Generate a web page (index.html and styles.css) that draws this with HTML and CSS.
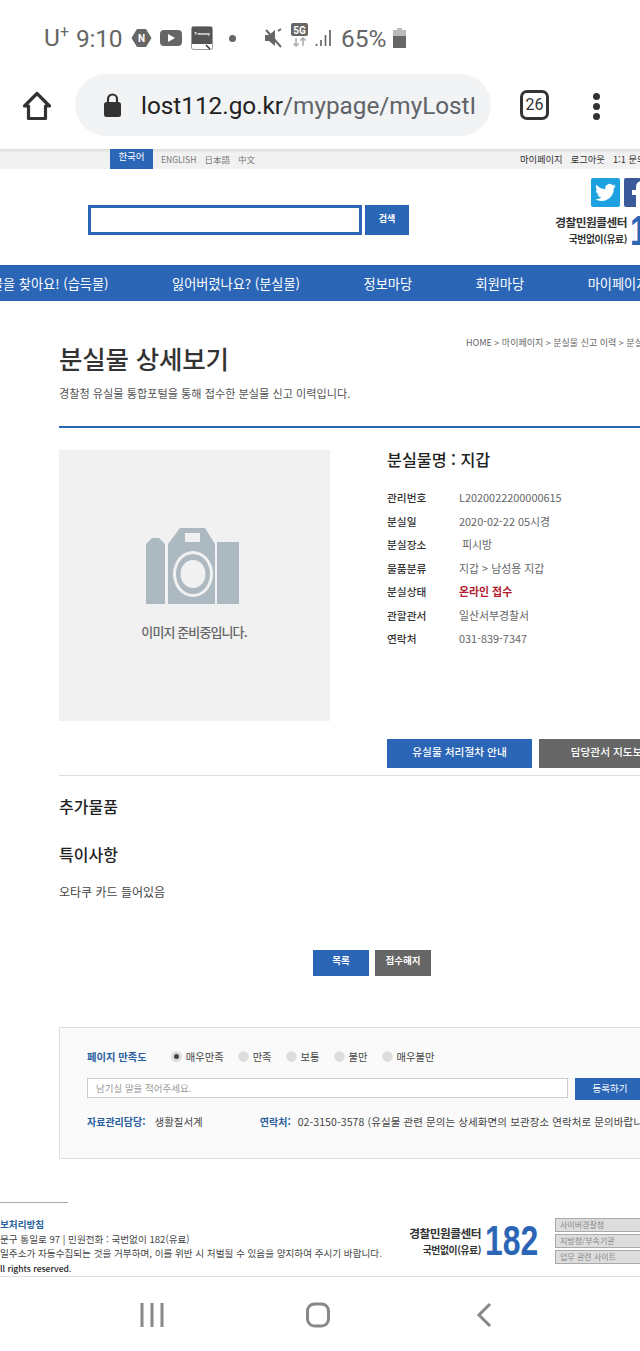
FILE: index.html
```html
<!DOCTYPE html>
<html lang="ko">
<head>
<meta charset="utf-8">
<title>분실물 상세보기</title>
<link rel="stylesheet" href="styles.css">
</head>
<body>
<div class="app">
  <div class="status">
    <span class="carrier">U<sup>+</sup></span>
    <span class="clock">9:10</span>
    <svg class="si-n" width="21" height="20" viewBox="0 0 21 20"><path d="M6 1h9l5.500 9-5.500 9H6L.5 10z" fill="#666"/><text x="10.500" y="14" class="si-n-t">N</text></svg>
    <svg class="si-play" width="22" height="18" viewBox="0 0 22 18"><rect y="1" width="22" height="16" rx="4" fill="#666"/><path d="M8 5l7 4-7 4z" fill="#fff"/></svg>
    <svg class="si-tm" width="22" height="24" viewBox="0 0 22 24"><rect x=".5" y=".5" width="21" height="23" rx="2" fill="#fff" stroke="#999"/><path d="M1 1h20v17H1z" fill="#555"/><text x="11" y="9" class="si-tm-t">T-money</text><path d="M15 19l4 4" stroke="#333" stroke-width="1.500"/></svg>
    <span class="si-dot"></span>
    <svg class="si-mute" width="19" height="22" viewBox="0 0 19 22"><path d="M1 8h4l6-5v16l-6-5H1z" fill="#666"/><path d="M2 3l15 17" stroke="#666" stroke-width="2"/><path d="M14 4l3-2" stroke="#666" stroke-width="2"/></svg>
    <svg class="si-5g" width="17" height="24" viewBox="0 0 17 24"><rect width="17" height="13" rx="2" fill="#666"/><text x="8.500" y="10.500" class="si-5g-t">5G</text><path d="M5 15v8M2.500 20.500L5 23l2.500-2.500M12 23v-8M9.500 17.500L12 15l2.500 2.500" stroke="#aaa" stroke-width="1.500" fill="none"/></svg>
    <svg class="si-signal" width="17" height="18" viewBox="0 0 17 18"><path d="M1.500 15v2M6 11v6M10.500 6v11M15 1v16" stroke="#666" stroke-width="1.700"/></svg>
    <span class="battery-text">65%</span>
    <svg class="si-batt" width="13" height="20" viewBox="0 0 13 20"><path d="M4 0h5v2h4v6H0V2h4z" fill="#bbb"/><path d="M0 8h13v12H0z" fill="#666"/></svg>
  </div>

  <div class="toolbar">
    <svg class="home" width="30" height="30" viewBox="0 0 30 30"><path d="M15 2.500L2.500 15H6.500v12.500h17V15h4z" fill="none" stroke="#333" stroke-width="3.200" stroke-linejoin="round"/></svg>
    <div class="pill">
      <svg width="19" height="25" viewBox="0 0 19 25"><rect x="1" y="9" width="17" height="15" rx="2.500" fill="#333"/><path d="M5 10V6a4.500 4.500 0 019 0v4" fill="none" stroke="#333" stroke-width="2.200"/></svg>
      <span class="url"><b>lost112.go.kr</b>/mypage/myLostI</span>
    </div>
    <span class="tabs">26</span>
    <span class="menu"><i></i><i></i><i></i></span>
  </div>

  <div class="web">
    <div class="topbar">
      <span class="lang-on">한국어</span>
      <span class="langs">ENGLISH</span>
      <span class="langs">日本語</span>
      <span class="langs">中文</span>
      <span class="toplink first">마이페이지</span>
      <span class="toplink">로그아웃</span>
      <span class="toplink">1:1 문의</span>
    </div>

    <header class="header">
      <div class="search">
        <div class="search-input"></div>
        <div class="search-btn">검색</div>
      </div>
      <div class="hright">
        <div class="social">
          <span class="sns tw"><svg width="21" height="21" viewBox="0 0 24 24"><path fill="#fff" d="M23.953 4.57a10 10 0 01-2.825.775 4.958 4.958 0 002.163-2.723c-.951.555-2.005.959-3.127 1.184a4.92 4.92 0 00-8.384 4.482C7.69 8.095 4.067 6.13 1.64 3.162a4.822 4.822 0 00-.666 2.475c0 1.71.87 3.213 2.188 4.096a4.904 4.904 0 01-2.228-.616v.06a4.923 4.923 0 003.946 4.827 4.996 4.996 0 01-2.212.085 4.936 4.936 0 004.604 3.417 9.867 9.867 0 01-6.102 2.105c-.39 0-.779-.023-1.17-.067a13.995 13.995 0 007.557 2.209c9.053 0 13.998-7.496 13.998-13.985 0-.21 0-.42-.015-.63A9.935 9.935 0 0024 4.59z"/></svg></span>
          <span class="sns fb"><svg width="29" height="29" viewBox="0 0 29 29"><path fill="#fff" d="M12 29V17H8v-5h4V9c0-4 2.500-6 6-6h3.500v4.500H19c-1.500 0-2 .7-2 2V12h4.500l-.7 5H17v12z"/></svg></span>
        </div>
        <div class="call">
          <div class="call-t">
            <div class="call-1">경찰민원콜센터</div>
            <div class="call-2">국번없이(유료)</div>
          </div>
          <div class="call-n">182</div>
        </div>
      </div>
    </header>

    <nav class="gnb">
      <span class="gnb-first"><span>물을 찾아요! (습득물)</span></span>
      <span>잃어버렸나요? (분실물)</span>
      <span>정보마당</span>
      <span>회원마당</span>
      <span>마이페이지</span>
    </nav>

    <main class="main">
      <div class="head">
        <div class="head-l">
          <h1>분실물 상세보기</h1>
          <p>경찰청 유실물 통합포털을 통해 접수한 분실물 신고 이력입니다.</p>
        </div>
        <div class="crumb">HOME &gt; 마이페이지 &gt; 분실물 신고 이력 &gt; 분실물 상세보기</div>
      </div>

      <section class="detail">
        <div class="photo">
          <svg width="94" height="78" viewBox="146 527 94 78"><path fill="#acb9c0" d="M146 604v-60l6-6h7l6 6v60zM168 604V544l12-16h25l10 16v60zM217 542h22v62h-22z"/><path fill="#f1f1f1" d="M185 533h15v9h-15z"/><ellipse cx="193" cy="574" rx="20" ry="23" fill="#f1f1f1"/><ellipse cx="193" cy="574" rx="17" ry="20" fill="#acb9c0"/><ellipse cx="193" cy="574" rx="12.500" ry="14" fill="#f1f1f1"/></svg>
          <span>이미지 준비중입니다.</span>
        </div>
        <div class="info">
          <h2>분실물명 : 지갑</h2>
          <dl class="rows">
            <dt>관리번호</dt><dd>L2020022200000615</dd>
            <dt>분실일</dt><dd>2020-02-22 05시경</dd>
            <dt>분실장소</dt><dd class="ind">피시방</dd>
            <dt>물품분류</dt><dd>지갑 &gt; 남성용 지갑</dd>
            <dt>분실상태</dt><dd class="red">온라인 접수</dd>
            <dt>관할관서</dt><dd>일산서부경찰서</dd>
            <dt>연락처</dt><dd>031-839-7347</dd>
          </dl>
          <div class="actions">
            <span class="act blue">유실물 처리절차 안내</span>
            <span class="act gray">담당관서 지도보기</span>
          </div>
        </div>
      </section>

      <h3 class="sec1">추가물품</h3>
      <h3 class="sec2">특이사항</h3>
      <p class="note">오타쿠 카드 들어있음</p>

      <div class="btns">
        <span class="btn blue">목록</span>
        <span class="btn gray">접수해지</span>
      </div>

      <div class="survey">
        <div class="s-row">
          <span class="s-label s-title">페이지 만족도</span>
          <div class="radios">
            <label><i class="radio on"></i>매우만족</label>
            <label><i class="radio"></i>만족</label>
            <label><i class="radio"></i>보통</label>
            <label><i class="radio"></i>불만</label>
            <label><i class="radio"></i>매우불만</label>
          </div>
        </div>
        <div class="s-input-row">
          <div class="s-input">남기실 말을 적어주세요.</div>
          <div class="s-btn">등록하기</div>
        </div>
        <div class="s-info">
          <span class="s-label">자료관리담당:</span>
          <span class="s-dept">생활질서계</span>
          <span class="s-label s-contact">연락처:</span>
          <span class="s-tel">02-3150-3578 (유실물 관련 문의는 상세화면의 보관장소 연락처로 문의바랍니다)</span>
        </div>
      </div>
    </main>

    <footer class="footer">
      <div class="f-rule"></div>
      <div class="f-row">
        <div class="f-text">
          <div class="f-policy">보처리방침</div>
          <div>문구 통일로 97 | 민원전화 : 국번없이 182(유료)</div>
          <div>일주소가 자동수집되는 것을 거부하며, 이를 위반 시 처벌될 수 있음을 양지하여 주시기 바랍니다.</div>
          <div class="f-copy">ll rights reserved.</div>
        </div>
        <div class="f-call">
          <div class="f-call-1">경찰민원콜센터</div>
          <div class="f-call-2">국번없이(유료)</div>
        </div>
        <div class="f-num">182</div>
        <div class="f-sel">
          <span>사이버경찰청</span>
          <span>지방청/부속기관</span>
          <span>업무 관련 사이트</span>
        </div>
      </div>
    </footer>
  </div>

  <div class="softnav">
    <svg width="24" height="26" viewBox="0 0 24 26"><path d="M2 1v24M12 1v24M22 1v24" stroke="#888" stroke-width="3"/></svg>
    <svg width="24" height="26" viewBox="0 0 24 26"><rect x="1.500" y="2" width="21" height="22" rx="7" fill="none" stroke="#888" stroke-width="3"/></svg>
    <svg width="24" height="26" viewBox="0 0 24 26"><path d="M18 2L7 13l11 11" fill="none" stroke="#888" stroke-width="3"/></svg>
  </div>
</div>
</body>
</html>
```

FILE: styles.css
```css
* { box-sizing: border-box; }
html, body { margin: 0; padding: 0; width: 640px; height: 1351px; overflow: hidden; background: #fff; }
body { font-family: "Noto Sans CJK KR", "Noto Sans", sans-serif; color: #333; }
h1, h2, h3, p, dl, dd, dt { margin: 0; padding: 0; font-weight: 400; }
i { font-style: normal; }
.app { display: flex; flex-direction: column; width: 640px; height: 1351px; overflow: hidden; }

/* status bar */
.status { flex: none; height: 74px; padding: 2px 0 0 44px; display: flex; align-items: center; font-family: Roboto, sans-serif; color: #666; font-size: 24.500px; }
.carrier { width: 32px; line-height: 1; }
.carrier sup { font-size: 16px; line-height: 0; }
.clock { width: 55px; letter-spacing: -.2px; }
.si-n-t { font: 700 10px Roboto, sans-serif; fill: #fff; text-anchor: middle; }
.si-5g-t { font: 700 10px Roboto, sans-serif; fill: #fff; text-anchor: middle; }
.si-tm-t { font: 700 4px Roboto, sans-serif; fill: #fff; text-anchor: middle; }
.si-play { margin-left: 8px; }
.si-tm { margin-left: 9px; }
.si-dot { width: 7px; height: 7px; border-radius: 50%; background: #666; margin-left: 16px; }
.si-mute { margin-left: 28px; }
.si-5g { margin-left: 8px; margin-top: -6px; }
.si-signal { margin-left: 7px; }
.battery-text { margin-left: 9px; width: 52px; }
.si-batt { margin-left: 0; }

/* browser toolbar */
.toolbar { flex: none; height: 75px; display: flex; align-items: flex-start; padding-left: 22px; }
.home { margin: 17px 23px 0 0; }
.pill { width: 416px; height: 62px; border-radius: 31px; background: #f1f3f4; display: flex; align-items: center; padding-left: 28px; gap: 19px; overflow: hidden; }
.url { font-family: Roboto, sans-serif; font-size: 24.300px; color: #5f6368; white-space: nowrap; }
.url b { font-weight: 400; color: #222; }
.tabs { width: 29px; height: 30px; margin: 16px 0 0 29px; border: 3px solid #333; border-radius: 7px; font: 400 16px/24px Roboto, sans-serif; text-align: center; color: #333; }
.menu { margin: 19px 0 0 44px; display: flex; flex-direction: column; gap: 3px; }
.menu i { display: block; width: 7px; height: 7px; border-radius: 50%; background: #333; }

/* web page */
.web { flex: 1; min-height: 0; overflow: hidden; display: flex; flex-direction: column; border-bottom: 1px solid #ddd; }
.topbar { flex: none; height: 20px; background: linear-gradient(#ddd, #f1f1f1 4px); display: flex; align-items: center; padding-left: 110px; font-size: 8.500px; white-space: nowrap; color: #777; }
.topbar span { flex: none; }
.lang-on { width: 43px; height: 20px; background: #2b66b6; color: #fff; text-align: center; line-height: 15px; font-size: 9.500px; margin-right: 8px; }
.langs { margin-right: 8px; }
.toplink { color: #333; margin-right: 8px; font-size: 9.300px; }
.toplink.first { margin-left: 257px; }

.header { flex: none; height: 96px; display: flex; align-items: flex-start; }
.search { display: flex; gap: 3px; margin: 36px 0 0 88px; }
.search-input { width: 274px; height: 30px; border: 3px solid #2b66b6; background: #fff; }
.search-btn { width: 44px; height: 30px; background: #2b66b6; color: #fff; font-size: 9px; font-weight: 700; text-align: center; line-height: 27px; }
.hright { margin: 9px 0 0 146px; width: 180px; flex: none; }
.social { display: flex; gap: 4px; padding-left: 36px; }
.sns { width: 29px; height: 29px; display: flex; align-items: center; justify-content: center; border-radius: 2px; }
.tw { background: #1da1e0; }
.fb { background: #3b5998; }
.call { display: flex; gap: 3px; margin-top: 6px; }
.call-t { width: 72px; text-align: right; color: #333; font-weight: 700; white-space: nowrap; }
.call-1 { font-size: 11.700px; line-height: 17px; letter-spacing: -.5px; }
.call-2 { font-size: 9.800px; line-height: 17px; margin-top: 1px; letter-spacing: -.4px; }
.call-n { font: 700 42px/34px "Liberation Sans", sans-serif; color: #2b66b6; transform: scaleX(.76); transform-origin: left; margin-top: 1px; }

.gnb { flex: none; height: 36px; background: #2b66b6; color: #fff; font-size: 13.200px; display: flex; align-items: center; gap: 63.500px; white-space: nowrap; }
.gnb span { flex: none; }
.gnb .gnb-first { width: 108.500px; display: flex; justify-content: flex-end; }

.main { flex: none; width: 640px; margin-left: 59px; }
.head { display: flex; height: 127px; border-bottom: 2px solid #2b66b6; }
.head-l { width: 407px; flex: none; padding-top: 42px; }
h1 { font-size: 25.500px; line-height: 30px; color: #333; font-weight: 500; letter-spacing: -.2px; }
.head-l p { font-size: 11.150px; line-height: 18px; margin-top: 11px; color: #555; white-space: nowrap; }
.crumb { padding-top: 35px; font-size: 9px; line-height: 14px; color: #666; white-space: nowrap; }

.detail { display: flex; height: 348px; padding-top: 22px; border-bottom: 1px solid #ddd; }
.photo { flex: none; width: 271px; height: 271px; background: #f1f1f1; display: flex; flex-direction: column; align-items: center; padding-top: 77px; color: #666; font-size: 13px; font-weight: 500; letter-spacing: -.9px; }
.photo svg { margin-left: -3px; }
.photo span { margin-top: 17px; margin-left: -1px; line-height: 20px; }
.info { margin-left: 57px; width: 300px; flex: none; }
h2 { font-size: 16.200px; line-height: 18px; color: #222; font-weight: 500; }
.rows { display: grid; grid-template-columns: 72px 1fr; grid-auto-rows: 23.500px; margin-top: 18px; font-size: 10.700px; line-height: 23.500px; white-space: nowrap; }
.rows dt { color: #333; font-weight: 500; }
.rows dd { color: #666; font-size: 10.900px; }
.rows .ind { padding-left: 3px; }
.rows .red { color: #b01c2e; font-weight: 700; }
.actions { display: flex; gap: 7px; margin-top: 88px; }
.act { width: 145px; height: 29px; color: #fff; font-size: 10.700px; font-weight: 500; text-align: center; line-height: 26px; white-space: nowrap; flex: none; }
.blue { background: #2b66b6; }
.gray { background: #666; }

h3 { font-size: 16px; line-height: 24px; color: #222; font-weight: 500; }
.sec1 { margin-top: 18px; }
.sec2 { margin-top: 24px; }
.note { margin-top: 16px; font-size: 12px; line-height: 20px; color: #444; }
.btns { display: flex; gap: 6px; margin: 48px 0 0 254px; }
.btn { height: 26px; color: #fff; font-size: 9.500px; font-weight: 700; text-align: center; line-height: 21px; width: 56px; }
.survey { margin-top: 51px; height: 132px; width: 640px; background: #fafafa; border: 1px solid #ddd; padding: 19px 0 0 27px; }
.s-row { display: flex; align-items: center; height: 18px; }
.s-label { color: #2a5f9e; font-size: 10px; font-weight: 700; white-space: nowrap; }
.s-title { font-size: 10.300px; }
.radios { display: flex; gap: 14px; margin-left: 24px; font-size: 10.300px; color: #444; }
.radios label { display: flex; align-items: center; gap: 4px; }
.radio { width: 11px; height: 11px; border-radius: 50%; background: #ddd; border: 1px solid #e6e6e6; }
.radio.on { background: #444; border: 3px solid #ddd; }
.s-input-row { display: flex; gap: 7px; margin-top: 13px; align-items: flex-start; }
.s-input { width: 481px; height: 20px; background: #fff; border: 1px solid #ccc; font-size: 9.500px; line-height: 18px; color: #999; padding-left: 8px; flex: none; }
.s-btn { width: 70px; height: 22px; background: #2b66b6; color: #fff; font-size: 9.500px; text-align: center; line-height: 20px; flex: none; }
.s-info { display: flex; align-items: center; height: 18px; margin-top: 12px; font-size: 10.500px; color: #444; white-space: nowrap; }
.s-dept { margin-left: 9px; }
.s-contact { margin-left: 57px; }
.s-tel { margin-left: 7px; letter-spacing: .1px; }

.footer { flex: none; }
.f-rule { width: 68px; height: 1px; background: #aaa; margin-top: 43px; }
.f-row { display: flex; margin-top: 14px; align-items: flex-start; }
.f-text { width: 408px; flex: none; font-size: 9.600px; line-height: 14.600px; white-space: nowrap; color: #444; overflow: hidden; }
.f-policy { color: #2a5f9e; font-weight: 700; }
.f-copy { color: #222; font-size: 8.500px; font-weight: 500; }
.f-call { width: 73px; flex: none; text-align: right; font-weight: 700; color: #333; margin-top: 7px; white-space: nowrap; }
.f-call-1 { font-size: 11.700px; line-height: 17px; letter-spacing: -.5px; }
.f-call-2 { font-size: 9.800px; line-height: 17px; margin-top: 1px; letter-spacing: -.4px; }
.f-num { width: 54px; margin: 3px 0 0 4px; flex: none; font: 700 42px/42px "Liberation Sans", sans-serif; color: #2b66b6; transform: scaleX(.76); transform-origin: left; }
.f-sel { display: flex; flex-direction: column; gap: 2px; margin: 1px 0 0 16px; width: 100px; flex: none; }
.f-sel span { height: 14px; background: #ddd; border: 1px solid #aaa; color: #888; font-size: 8px; line-height: 11px; padding-left: 4px; white-space: nowrap; }

.softnav { flex: none; height: 74px; display: flex; gap: 142px; padding: 25px 0 0 140px; align-items: flex-start; }
```
